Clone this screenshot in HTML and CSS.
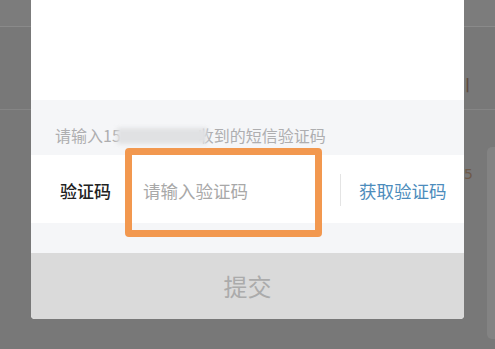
FILE: index.html
```html
<!DOCTYPE html>
<html lang="zh-CN">
<head>
<meta charset="utf-8">
<title>验证码</title>
<link rel="stylesheet" href="styles.css">
</head>
<body>
<div class="page">
  <div class="topbar"></div>
  <div class="row row-one"><span class="peek peek-bar">|</span></div>
  <div class="row-two">
    <span class="peek peek-five">5</span>
    <div class="side-card"></div>
  </div>

  <div class="overlay">
    <div class="modal">
      <div class="modal-top"></div>
      <div class="hint">请输入15<span class="masked"></span>收到的短信验证码</div>
      <div class="field">
        <span class="label">验证码</span>
        <input class="code-input" type="text" placeholder="请输入验证码">
        <span class="divider"></span>
        <a class="get-code">获取验证码</a>
      </div>
      <div class="gap"></div>
      <div class="submit">提交</div>
      <div class="highlight"></div>
    </div>
  </div>
</div>
</body>
</html>
```

FILE: styles.css
```css
* { box-sizing: border-box; }

html, body {
  margin: 0;
  padding: 0;
  background: #787878;
  font-family: "Noto Sans CJK SC", "Noto Sans", sans-serif;
}

.page {
  position: relative;
  width: 495px;
  height: 349px;
  overflow: hidden;
  background: #787878;
  display: flex;
  flex-direction: column;
}

.topbar {
  height: 27px;
  flex: none;
  background: #7c7c7c;
  border-bottom: 1px solid #8a8a8a;
}

.row {
  height: 83px;
  flex: none;
  border-bottom: 1px solid #858585;
  display: flex;
  justify-content: flex-end;
  padding-top: 50px;
  padding-right: 22px;
}

.peek {
  color: #5f4d40;
  font-family: "DejaVu Sans", sans-serif;
  line-height: 1;
}

.peek-bar {
  font-size: 14px;
  font-weight: bold;
  width: 8px;
}

.row-two {
  flex: 1;
  display: flex;
  justify-content: flex-end;
  align-items: flex-start;
  padding-top: 37px;
  padding-bottom: 9px;
}

.peek-five {
  font-size: 14px;
  margin-top: 20px;
  margin-right: 14px;
  color: #6e5a4a;
}

.side-card {
  width: 8px;
  height: 192px;
  background: #838383;
  border-radius: 5px 0 0 5px;
}

.overlay {
  position: absolute;
  inset: 0;
  padding-left: 31px;
}

.modal {
  position: relative;
  width: 433px;
  height: 319px;
  background: #ffffff;
  border-radius: 0 0 4px 4px;
  overflow: hidden;
  display: flex;
  flex-direction: column;
}

.modal-top {
  height: 100px;
  flex: none;
  background: #ffffff;
}

.hint {
  height: 55px;
  flex: none;
  background: #f5f6f8;
  padding: 25px 0 0 24px;
  font-size: 16px;
  line-height: 20px;
  color: #aeaeb0;
  white-space: nowrap;
}

.masked {
  position: relative;
  z-index: 1;
  display: inline-block;
  width: 90px;
  height: 16px;
  margin: 0 -9px 0 -4px;
  vertical-align: -2px;
  background: #e0e1e3;
  filter: blur(2px);
}

.field {
  height: 68px;
  flex: none;
  background: #ffffff;
  display: flex;
  align-items: center;
  padding-left: 29px;
  padding-top: 2px;
}

.label {
  font-size: 17px;
  font-weight: 500;
  color: #222;
  width: 52px;
  margin-right: 31px;
  white-space: nowrap;
}

.code-input {
  width: 197px;
  border: none;
  outline: none;
  background: transparent;
  padding: 0;
  font-family: inherit;
  font-size: 17.5px;
  color: #333;
}

.code-input::placeholder {
  color: #a8a8a8;
}

.divider {
  width: 1px;
  height: 32px;
  background: #e4e4e4;
  margin-right: 18px;
}

.get-code {
  font-size: 17.5px;
  color: #4c8cbc;
  white-space: nowrap;
}

.gap {
  height: 30px;
  flex: none;
  background: #f5f6f8;
}

.submit {
  flex: 1;
  background: #dadada;
  color: #ababab;
  font-size: 24px;
  display: flex;
  align-items: center;
  justify-content: center;
  padding-bottom: 2px;
}

.highlight {
  position: absolute;
  left: 94px;
  top: 148px;
  width: 197px;
  height: 89px;
  border: 7px solid #f2984f;
  border-radius: 4px;
  pointer-events: none;
}
```
